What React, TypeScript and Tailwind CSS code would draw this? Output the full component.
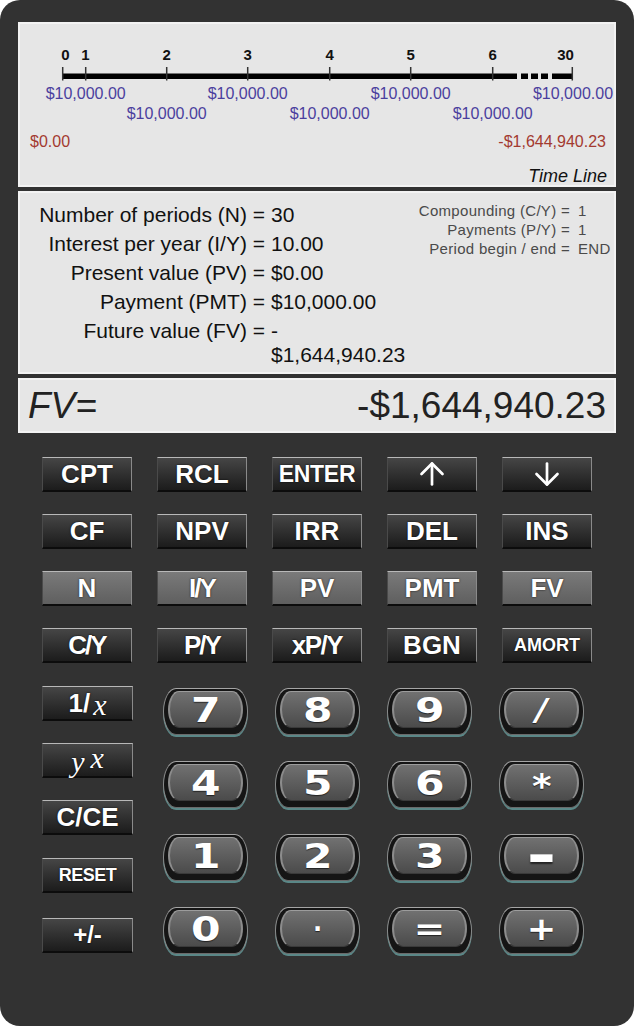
import React from 'react';
import { ArrowUp, ArrowDown } from 'lucide-react';
import clsx from 'clsx';

const sans = "font-['Liberation_Sans',Arial,sans-serif]";

interface KeyProps {
  children: React.ReactNode;
  gray?: boolean;
  className?: string;
}

function Key({ children, gray, className }: KeyProps) {
  return (
    <div
      className={clsx(
        'flex h-[35px] items-center justify-center border-t border-r border-l border-b-2 border-t-[#b8b8b8] border-r-[#8a8a8a] border-l-[#4a4a4a] border-b-[#0c0c0c] font-bold leading-none text-white [text-shadow:0_0_2px_rgba(0,0,0,0.9)]',
        sans,
        gray ? 'bg-linear-to-b from-[#7a7a7a] to-[#5f5f5f]' : 'bg-linear-to-b from-[#464646] to-[#1c1c1c]',
        className,
      )}
    >
      {children}
    </div>
  );
}

function NumKey({ label, textClass }: { label: string; textClass?: string }) {
  return (
    <div className="h-[47px] w-[85px] rounded-[13px/50%] border-[1.5px] border-t-[#a5a5a5] border-x-[#8a8a8a] border-b-[#6a6a6a] bg-[#151515] px-[4px] pt-[2px] pb-[6px] shadow-[0_2px_0_#5a8787]">
      <div className="flex h-full items-center justify-center rounded-[11px/50%] border-t border-x-2 border-b border-t-[#9c9c9c] border-x-[#8c8c8c] border-b-[#3a3a3a] bg-linear-to-b from-[#717171] to-[#4b4b4b]">
        <span
          className={clsx(
            "inline-block font-['DejaVu_Sans',sans-serif] font-bold leading-none text-white [text-shadow:0_1px_1px_rgba(0,0,0,0.6)]",
            textClass ?? 'text-[34px] scale-x-125',
          )}
        >
          {label}
        </span>
      </div>
    </div>
  );
}

const ticks = [
  { n: '0', x: 62.7, lx: 65.5 },
  { n: '1', x: 85.7, lx: 85.5 },
  { n: '2', x: 166.7, lx: 166.7 },
  { n: '3', x: 247.7, lx: 247.7 },
  { n: '4', x: 329.7, lx: 329.7 },
  { n: '5', x: 410.7, lx: 410.7 },
  { n: '6', x: 492.7, lx: 492.7 },
  { n: '30', x: 572.3, lx: 565.5 },
];

function TimeLine() {
  const font = 'Liberation Sans, Arial, sans-serif';
  return (
    <svg width="594" height="161" viewBox="20 24 594 161">
      <rect x="62" y="73.5" width="455" height="5.5" fill="#000" />
      <rect x="521" y="73.5" width="7" height="5.5" fill="#000" />
      <rect x="531" y="73.5" width="7" height="5.5" fill="#000" />
      <rect x="541" y="73.5" width="7" height="5.5" fill="#000" />
      <rect x="552" y="73.5" width="21" height="5.5" fill="#000" />
      {ticks.map((t) => (
        <g key={t.n}>
          <line x1={t.x} y1="67" x2={t.x} y2="80.5" stroke="#333" strokeWidth="1.5" />
          <text x={t.lx} y="60" textAnchor="middle" fontFamily={font} fontWeight="bold" fontSize="15" fill="#111">
            {t.n}
          </text>
        </g>
      ))}
      {[85.7, 247.7, 410.7, 573].map((x) => (
        <text key={'a' + x} x={x} y="99" textAnchor="middle" fontFamily={font} fontSize="16" fill="#4b3f9e">
          $10,000.00
        </text>
      ))}
      {[166.7, 329.7, 492.7].map((x) => (
        <text key={'b' + x} x={x} y="119" textAnchor="middle" fontFamily={font} fontSize="16" fill="#4b3f9e">
          $10,000.00
        </text>
      ))}
      <text x="30" y="147" fontFamily={font} fontSize="16" fill="#a33a30">
        $0.00
      </text>
      <text x="606" y="147" textAnchor="end" fontFamily={font} fontSize="16" fill="#a33a30">
        -$1,644,940.23
      </text>
      <text x="607" y="182" textAnchor="end" fontFamily={font} fontStyle="italic" fontSize="18" fill="#111">
        Time Line
      </text>
    </svg>
  );
}

const infoRows: Array<[string, React.ReactNode]> = [
  ['Number of periods (N) =', '30'],
  ['Interest per year (I/Y) =', '10.00'],
  ['Present value (PV) =', '$0.00'],
  ['Payment (PMT) =', '$10,000.00'],
  [
    'Future value (FV) =',
    <>
      -<br />$1,644,940.23
    </>,
  ],
];

const settings: Array<[string, string]> = [
  ['Compounding (C/Y) =', '1'],
  ['Payments (P/Y) =', '1'],
  ['Period begin / end =', 'END'],
];

export default function App() {
  return (
    <div className="h-[1026px] w-[634px] bg-white">
      <div className={clsx('h-[1026px] w-[634px] rounded-[20px] bg-[#323232] px-[18px] pt-[22px]', sans)}>
        {/* time line */}
        <div className="h-[165px] w-[598px] border-2 border-[#f3f3f3] bg-[#e6e6e6]">
          <TimeLine />
        </div>

        {/* worksheet values */}
        <div className="mt-[4px] flex h-[183px] w-[598px] justify-between border-2 border-[#f3f3f3] bg-[#e6e6e6] pt-[10px] pr-[4px]">
          <div className="flex flex-col gap-[5px] text-[21px] leading-[24px] text-[#111]">
            {infoRows.map(([label, value]) => (
              <div key={label} className="grid grid-cols-[245px_1fr]">
                <div className="text-right whitespace-nowrap">{label}</div>
                <div className="pl-[6px] whitespace-nowrap">{value}</div>
              </div>
            ))}
          </div>
          <div className="-mt-[2px] grid h-fit grid-cols-[auto_32px] gap-x-[8px] text-[15px] leading-[19px] tracking-[0.3px] text-[#4a4a4a]">
            {settings.map(([label, value]) => (
              <React.Fragment key={label}>
                <div className="text-right whitespace-nowrap">{label}</div>
                <div className="whitespace-nowrap">{value}</div>
              </React.Fragment>
            ))}
          </div>
        </div>

        {/* display */}
        <div className="mt-[4px] flex h-[55px] w-[598px] items-center justify-between border-2 border-[#f3f3f3] bg-[#e6e6e6] px-[8px] text-[37px] leading-none text-[#222]">
          <span className="italic">FV=</span>
          <span>-$1,644,940.23</span>
        </div>

        {/* function keys */}
        <div className="mt-[24px] ml-[24px] grid w-[550px] grid-cols-[repeat(5,90px)] gap-x-[25px] gap-y-[22px]">
          <Key className="text-[26px]">CPT</Key>
          <Key className="text-[26px]">RCL</Key>
          <Key className="text-[23px] tracking-[-0.3px]">ENTER</Key>
          <Key>
            <ArrowUp size={36} strokeWidth={1.8} />
          </Key>
          <Key>
            <ArrowDown size={36} strokeWidth={1.8} />
          </Key>

          <Key className="text-[26px]">CF</Key>
          <Key className="text-[26px]">NPV</Key>
          <Key className="text-[26px]">IRR</Key>
          <Key className="text-[26px]">DEL</Key>
          <Key className="text-[26px]">INS</Key>

          <Key gray className="text-[26px]">N</Key>
          <Key gray className="text-[26px] tracking-[-2px]">I/Y</Key>
          <Key gray className="text-[26px]">PV</Key>
          <Key gray className="text-[26px]">PMT</Key>
          <Key gray className="text-[26px]">FV</Key>

          <Key className="text-[26px] tracking-[-2px]">C/Y</Key>
          <Key className="text-[26px] tracking-[-2px]">P/Y</Key>
          <Key className="text-[26px] tracking-[-1.5px]">xP/Y</Key>
          <Key className="text-[26px]">BGN</Key>
          <Key className="text-[18px]">AMORT</Key>
        </div>

        {/* lower block */}
        <div className="mt-[23px] ml-[24px] flex">
          <div className="flex w-[91px] flex-col gap-[22px]">
            <Key className="items-start pt-[3px] text-[26px]">
              1/
              <span className="ml-[3px] font-['Liberation_Serif',serif] text-[30px] font-normal italic">x</span>
            </Key>
            <Key className="items-start pt-[1px] font-['Liberation_Serif',serif] text-[30px] font-normal italic">
              <span className="mt-[2px]">y</span>
              <span className="ml-[6px] mt-[-2px]">x</span>
            </Key>
            <Key className="text-[26px]">C/CE</Key>
            <Key className="mt-[1px] text-[18px] tracking-[-0.5px]">RESET</Key>
            <Key className="mt-[3px] text-[24px]">+/-</Key>
          </div>
          <div className="ml-[30px] grid grid-cols-[repeat(4,85px)] gap-x-[27px] gap-y-[26px] pt-[2px]">
            <NumKey label="7" />
            <NumKey label="8" />
            <NumKey label="9" />
            <NumKey label="/" textClass="text-[30px] scale-x-110 italic" />
            <NumKey label="4" />
            <NumKey label="5" />
            <NumKey label="6" />
            <NumKey label="*" textClass="text-[34px] scale-x-110 mt-[6px]" />
            <NumKey label="1" />
            <NumKey label="2" />
            <NumKey label="3" />
            <NumKey label="-" textClass="text-[36px] scale-x-200 scale-y-150" />
            <NumKey label="0" />
            <NumKey label="·" textClass="text-[24px]" />
            <NumKey label="=" textClass="text-[30px] scale-x-125" />
            <NumKey label="+" textClass="text-[32px] scale-x-110" />
          </div>
        </div>
      </div>
    </div>
  );
}
